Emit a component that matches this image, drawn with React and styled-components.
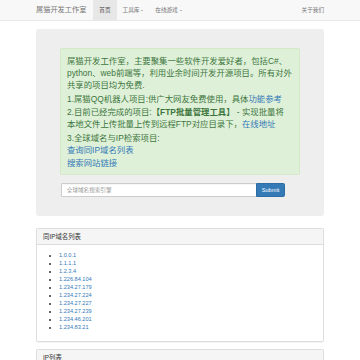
import React from 'react';
import styled, { createGlobalStyle } from 'styled-components';

const GlobalStyle = createGlobalStyle`
  html, body {
    margin: 0;
    padding: 0;
    background: #fff;
  }
  body {
    font-family: "Liberation Sans", Arial, "Noto Sans CJK SC", sans-serif;
    font-size: 5.6px;
    line-height: 8px;
    color: #333;
  }
  * {
    box-sizing: border-box;
  }
  a {
    color: #337ab7;
    text-decoration: none;
  }
`;

const ipList = [
  '1.0.0.1',
  '1.1.1.1',
  '1.2.3.4',
  '1.226.84.104',
  '1.234.27.179',
  '1.234.27.224',
  '1.234.27.227',
  '1.234.27.239',
  '1.234.46.201',
  '1.234.83.21',
];

export default function App() {
  return (
    <>
      <GlobalStyle />
      <Navbar>
        <NavContainer>
          <Brand href="#">屌猫开发工作室</Brand>
          <NavList>
            <NavItem $active>首页</NavItem>
            <NavItem>
              工具库 <Caret />
            </NavItem>
            <NavItem>
              在线游戏 <Caret />
            </NavItem>
          </NavList>
          <NavRight>
            <NavItem>关于我们</NavItem>
          </NavRight>
        </NavContainer>
      </Navbar>

      <Container>
        <Jumbotron>
          <Alert>
            <Para $gap={2.5}>
              屌猫开发工作室，主要聚集一些软件开发爱好者，包括C#、python、web前端等，利用业余时间开发开源项目。所有对外共享的项目均为免费.
            </Para>
            <Para $gap={1}>
              1.屌猫QQ机器人项目:供广大网友免费使用，具体<a href="#">功能参考</a>
            </Para>
            <Para $gap={1.5}>
              2.目前已经完成的项目:<strong>【FTP批量管理工具】</strong> - 实现批量将
              <br />
              本地文件上传批量上传到远程FTP对应目录下，<a href="#">在线地址</a>
            </Para>
            <Para $gap={0}>3.全球域名与IP检索项目:</Para>
            <Para $gap={1.5}>
              <a href="#">查询同IP域名列表</a>
            </Para>
            <Para $gap={0}>
              <a href="#">搜索网站链接</a>
            </Para>
          </Alert>
          <SearchForm>
            <SearchInput placeholder="全球域名搜索引擎" />
            <SubmitButton type="button">Submit</SubmitButton>
          </SearchForm>
        </Jumbotron>

        <Panel>
          <PanelHeading>
            <PanelTitle>同IP域名列表</PanelTitle>
          </PanelHeading>
          <PanelBody>
            <IpList>
              {ipList.map((ip) => (
                <li key={ip}>
                  <a href="#">{ip}</a>
                </li>
              ))}
            </IpList>
          </PanelBody>
        </Panel>

        <Panel>
          <PanelHeading>
            <PanelTitle>IP列表</PanelTitle>
          </PanelHeading>
          <PanelBody>
            <IpList />
          </PanelBody>
        </Panel>
      </Container>
    </>
  );
}

const Navbar = styled.nav`
  height: 21px;
  background: #f8f8f8;
  border-bottom: 1px solid #e7e7e7;
  margin-bottom: 8px;
`;

const NavContainer = styled.div`
  width: 300px;
  margin: 0 auto;
  padding: 0 6px;
  display: flex;
  align-items: stretch;
  height: 20px;
`;

const Brand = styled.a`
  font-size: 7.2px;
  line-height: 8px;
  padding: 6px 6px 6px 0;
  color: #777;
  white-space: nowrap;
`;

const NavList = styled.div`
  display: flex;
  margin-left: 1px;
`;

const NavRight = styled.div`
  display: flex;
  margin-left: auto;
  margin-right: -6px;
`;

const NavItem = styled.a`
  display: flex;
  align-items: center;
  padding: 0 6px;
  font-size: 5.6px;
  line-height: 8px;
  color: ${(props) => (props.$active ? '#555' : '#777')};
  background: ${(props) => (props.$active ? '#e7e7e7' : 'transparent')};
  white-space: nowrap;
`;

const Caret = styled.span`
  display: inline-block;
  width: 0;
  height: 0;
  margin-left: 2px;
  border-top: 1.6px solid #777;
  border-left: 1.6px solid transparent;
  border-right: 1.6px solid transparent;
`;

const Container = styled.div`
  width: 300px;
  margin: 0 auto;
  padding: 0 6px;
`;

const Jumbotron = styled.div`
  background: #eee;
  border-radius: 2.4px;
  padding: 19px 24px 19px;
  margin-bottom: 12px;
`;

const Alert = styled.div`
  background: #dff0d8;
  border: 0.4px solid #d6e9c6;
  border-radius: 1.6px;
  color: #3c763d;
  padding: 5.6px 6px 5px;
  margin-bottom: 8px;
  font-size: 8.4px;
  line-height: 12px;

  strong {
    font-weight: bold;
  }
`;

const Para = styled.p`
  margin: 0 0 ${(props) => props.$gap}px;
`;

const SearchForm = styled.form`
  display: flex;
  width: 224px;
  margin: 0 0 0 1px;
  height: 14px;
`;

const SearchInput = styled.input`
  flex: 1;
  min-width: 0;
  height: 14px;
  border: 0.4px solid #ccc;
  border-right: none;
  border-radius: 1.6px 0 0 1.6px;
  background: #fff;
  padding: 0 4.8px;
  font-family: inherit;
  font-size: 5.6px;
  color: #555;
  box-shadow: inset 0 0.4px 0.4px rgba(0, 0, 0, 0.075);
  outline: none;

  &::placeholder {
    color: #999;
  }
`;

const SubmitButton = styled.button`
  height: 14px;
  padding: 0 4.8px;
  border: 0.4px solid #2e6da4;
  border-radius: 0 1.6px 1.6px 0;
  background: #337ab7;
  color: #fff;
  font-family: inherit;
  font-size: 5.6px;
  line-height: 8px;
  cursor: pointer;
`;

const Panel = styled.div`
  border: 1px solid #ddd;
  border-radius: 1.6px;
  background: #fff;
  margin-bottom: 7px;
  box-shadow: 0 0.4px 0.8px rgba(0, 0, 0, 0.05);
`;

const PanelHeading = styled.div`
  background: #f5f5f5;
  border-bottom: 1px solid #ddd;
  padding: 4px 6px;
`;

const PanelTitle = styled.h3`
  margin: 0;
  font-size: 6.4px;
  line-height: 7px;
  font-weight: normal;
  color: #333;
`;

const PanelBody = styled.div`
  padding: 6px;
`;

const IpList = styled.ul`
  margin: 0 0 4px;
  padding-left: 16px;
  font-size: 5.6px;
  line-height: 8px;
  min-height: 8px;

  li::marker {
    color: #333;
  }
`;
